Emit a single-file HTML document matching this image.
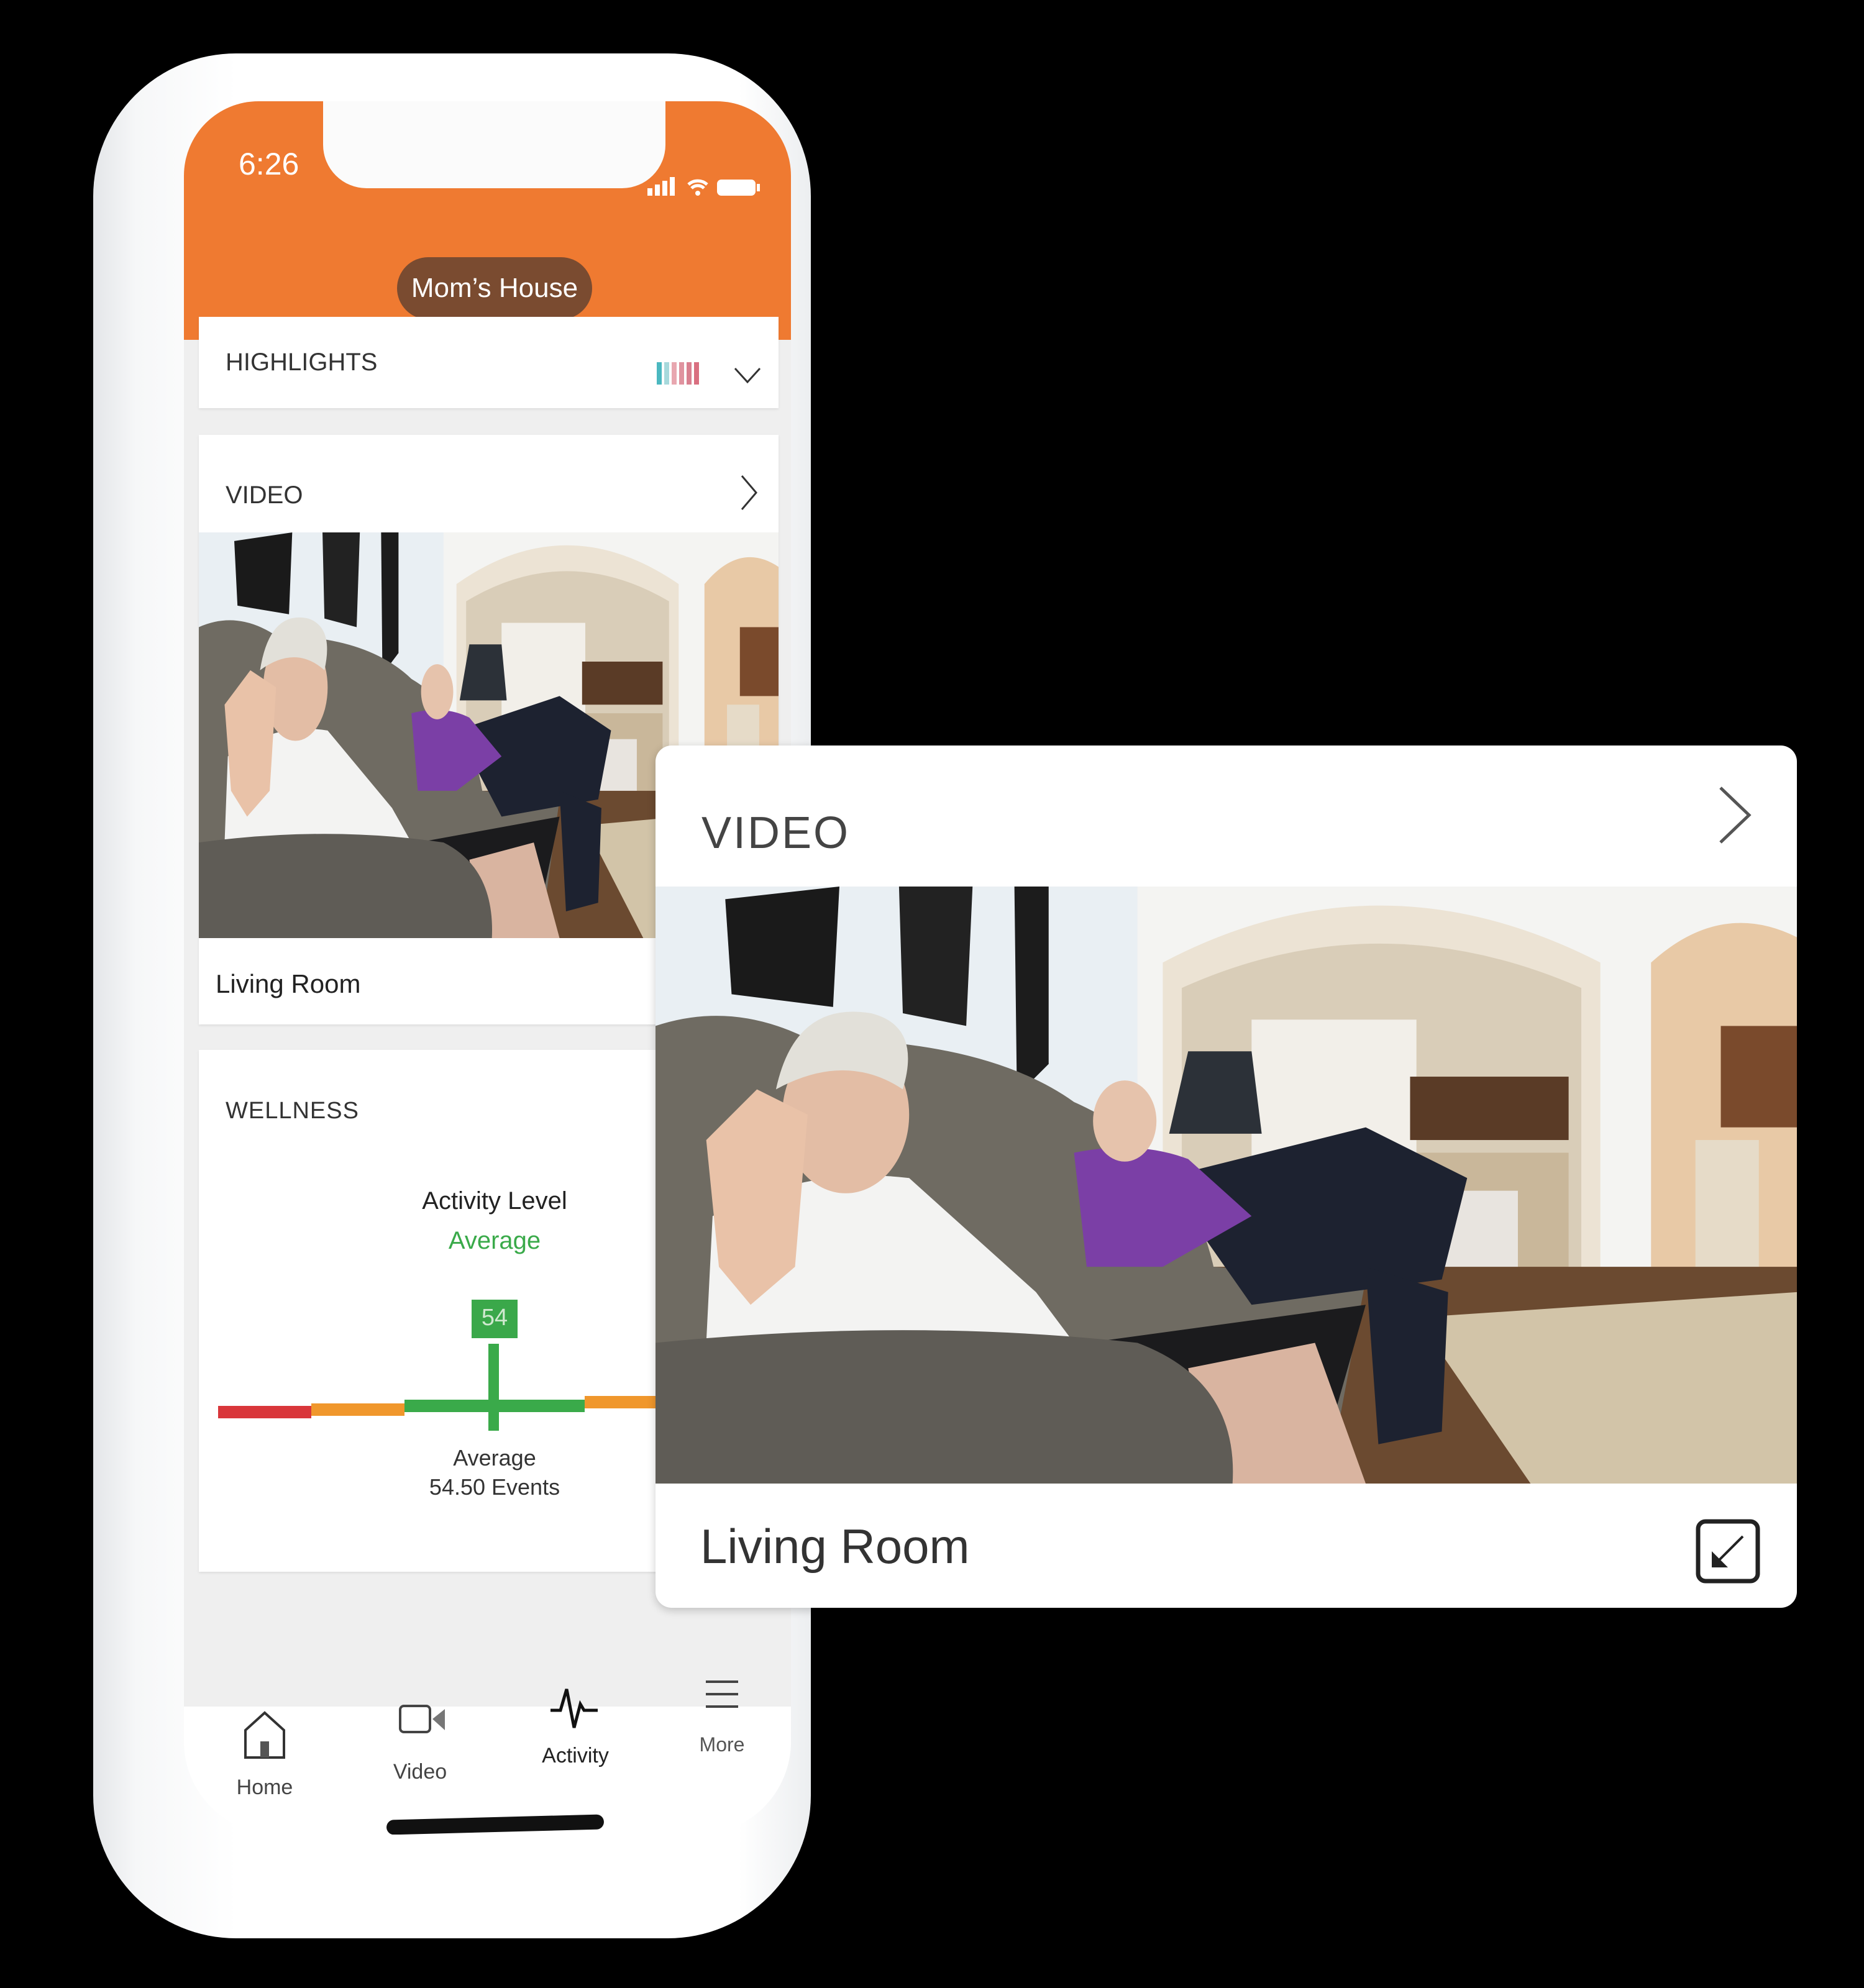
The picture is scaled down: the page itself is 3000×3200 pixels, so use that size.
<!DOCTYPE html>
<html><head><meta charset="utf-8"><style>
*{margin:0;padding:0;box-sizing:border-box}
body{width:3000px;height:3200px;background:#000;position:relative;overflow:hidden;font-family:"Liberation Sans",sans-serif}
.abs{position:absolute}
.phone{left:150px;top:86px;width:1155px;height:3034px;border-radius:230px;background:linear-gradient(90deg,#e4e6e9 0,#f6f7f8 6%,#fff 20%,#fff 90%,#eceef0 100%)}
.screen{left:296px;top:163px;width:977px;height:2790px;border-radius:120px 120px 150px 150px;background:#fff;overflow:hidden}
.gray{left:0;top:384px;width:977px;height:2200px;background:#efefef}
.hdr{left:0;top:0;width:977px;height:384px;background:#ef7a31}
.notch{left:224px;top:-20px;width:551px;height:160px;background:#fbfbfb;border-radius:0 0 70px 70px}
.card{background:#fff;box-shadow:0 2px 4px rgba(0,0,0,.08)}
.t{color:#222;white-space:nowrap}
</style></head><body>
<div class="abs phone"></div>
<div class="abs screen">
 <div class="abs hdr"></div>
 <div class="abs notch"></div>
 <div class="abs t" style="left:88px;top:72px;font-size:50px;color:#fff">6:26</div>
 <svg class="abs" style="left:746px;top:118px" width="190" height="40" viewBox="0 0 190 40">
  <rect x="0" y="22" width="8" height="12" fill="#fff"/><rect x="12" y="16" width="8" height="18" fill="#fff"/><rect x="24" y="10" width="8" height="24" fill="#fff"/><rect x="36" y="4" width="8" height="30" fill="#fff"/>
  <path d="M66 16a22 22 0 0 1 30 0M71 22a14 14 0 0 1 20 0" stroke="#fff" stroke-width="5" fill="none"/><circle cx="81" cy="30" r="4" fill="#fff"/>
  <rect x="112" y="8" width="62" height="26" rx="7" fill="#fff"/><rect x="176" y="15" width="5" height="12" fill="#fff"/>
 </svg>
 <div class="abs" style="left:343px;top:251px;width:314px;height:100px;border-radius:50px;background:#7a4b30"></div>
 <div class="abs t" style="left:343px;top:276px;width:314px;text-align:center;font-size:44px;color:#fff">Mom’s House</div>
 <div class="abs gray"></div>
 <div class="abs card" style="left:24px;top:347px;width:933px;height:147px"></div>
 <div class="abs t" style="left:67px;top:398px;font-size:40px;color:#333">HIGHLIGHTS</div>
 <svg class="abs" style="left:761px;top:420px" width="80" height="36"><rect x="0" width="8" height="36" fill="#4bb8c0"/><rect x="12" width="8" height="36" fill="#a7d9dc"/><rect x="24" width="8" height="36" fill="#e8a7b0"/><rect x="36" width="8" height="36" fill="#e0939f"/><rect x="48" width="8" height="36" fill="#d9808f"/><rect x="60" width="8" height="36" fill="#d96f80"/></svg>
 <svg class="abs" style="left:885px;top:428px" width="44" height="26"><path d="M2 2L22 24L42 2" stroke="#333" stroke-width="3" fill="none"/></svg>
 <div class="abs card" style="left:24px;top:537px;width:933px;height:949px"></div>
 <div class="abs t" style="left:67px;top:612px;font-size:40px;color:#333">VIDEO</div>
 <svg class="abs" style="left:895px;top:600px" width="30" height="60"><path d="M3 3L26 30L3 57" stroke="#333" stroke-width="3" fill="none"/></svg>
 <svg class="abs" style="left:24px;top:694px" width="933" height="653" viewBox="0 0 900 471" preserveAspectRatio="none"><use href="#scene"/></svg>
 <div class="abs t" style="left:51px;top:1397px;font-size:42px">Living Room</div>
 <div class="abs card" style="left:24px;top:1527px;width:933px;height:840px"></div>
 <div class="abs t" style="left:67px;top:1604px;font-size:38px;letter-spacing:1px;color:#333">WELLNESS</div>
 <div class="abs t" style="left:300px;top:1748px;width:400px;text-align:center;font-size:40px">Activity Level</div>
 <div class="abs t" style="left:300px;top:1812px;width:400px;text-align:center;font-size:40px;color:#3aaa4a">Average</div>
 <div class="abs" style="left:463px;top:1929px;width:74px;height:62px;background:#3aa84a"></div>
 <div class="abs t" style="left:463px;top:1937px;width:74px;text-align:center;font-size:38px;color:#cfe9cf">54</div>
 <div class="abs" style="left:55px;top:2100px;width:150px;height:20px;background:#d9363a"></div>
 <div class="abs" style="left:205px;top:2096px;width:150px;height:20px;background:#f0972c"></div>
 <div class="abs" style="left:355px;top:2090px;width:290px;height:20px;background:#3aaa4a"></div>
 <div class="abs" style="left:645px;top:2084px;width:300px;height:20px;background:#f0972c"></div>
 <div class="abs" style="left:490px;top:2000px;width:17px;height:140px;background:#3aaa4a"></div>
 <div class="abs t" style="left:300px;top:2163px;width:400px;text-align:center;font-size:36px;color:#333">Average</div>
 <div class="abs t" style="left:300px;top:2210px;width:400px;text-align:center;font-size:36px;color:#333">54.50 Events</div>
 <div class="abs" style="left:0;top:2584px;width:977px;height:300px;background:#fff"></div>
 <svg class="abs" style="left:95px;top:2590px" width="70" height="80"><path d="M4 76V32L35 4L66 32V76Z" stroke="#333" stroke-width="4" fill="none"/><rect x="28" y="50" width="14" height="26" fill="#555"/></svg>
 <div class="abs t" style="left:60px;top:2695px;width:140px;text-align:center;font-size:34px;color:#444">Home</div>
 <svg class="abs" style="left:345px;top:2580px" width="80" height="50"><rect x="3" y="3" width="48" height="42" rx="6" stroke="#444" stroke-width="4" fill="none"/><path d="M55 24L75 8V42Z" fill="#777"/></svg>
 <div class="abs t" style="left:310px;top:2670px;width:140px;text-align:center;font-size:34px;color:#444">Video</div>
 <svg class="abs" style="left:588px;top:2550px" width="80" height="72"><path d="M2 40H18L28 6L40 68L50 30L56 40H78" stroke="#111" stroke-width="5" fill="none"/></svg>
 <div class="abs t" style="left:560px;top:2644px;width:140px;text-align:center;font-size:34px;color:#222">Activity</div>
 <svg class="abs" style="left:838px;top:2540px" width="56" height="50"><path d="M2 4H54M2 24H54M2 44H54" stroke="#444" stroke-width="4"/></svg>
 <div class="abs t" style="left:796px;top:2627px;width:140px;text-align:center;font-size:32px;color:#555">More</div>
 <div class="abs" style="left:326px;top:2762px;width:350px;height:24px;border-radius:12px;background:#111;transform:rotate(-1.5deg)"></div>
</div>

<div class="abs" style="left:1055px;top:1200px;width:1837px;height:1388px;background:#fff;border-radius:26px;overflow:hidden;box-shadow:0 4px 14px rgba(0,0,0,.2)">
 <div class="abs t" style="left:74px;top:100px;font-size:72px;color:#444;letter-spacing:3px">VIDEO</div>
 <svg class="abs" style="left:1708px;top:62px" width="60" height="100"><path d="M6 6L52 50L6 94" stroke="#555" stroke-width="5" fill="none"/></svg>
 <svg class="abs" style="left:0;top:227px" width="1837" height="961" viewBox="0 0 900 471" preserveAspectRatio="none">
  <defs><g id="scene">
   <rect width="900" height="471" fill="#e9eff3"/>
   <rect x="380" y="0" width="520" height="330" fill="#f4f4f2"/>
   <path d="M400 320V60Q570 -30 745 60V320Z" fill="#ece3d4"/>
   <path d="M415 320V80Q570 10 730 80V320Z" fill="#d9cdb8"/>
   <rect x="470" y="105" width="130" height="200" fill="#f2efe9"/>
   <rect x="595" y="150" width="125" height="50" fill="#5a3b26"/>
   <rect x="560" y="210" width="160" height="100" fill="#c9b79a"/>
   <rect x="620" y="240" width="60" height="70" fill="#e8e4df"/>
   <path d="M785 320V60Q840 10 900 40V320Z" fill="#e8c9a6"/>
   <rect x="840" y="110" width="60" height="80" fill="#7a4a2c"/>
   <rect x="820" y="200" width="50" height="130" fill="#e6dbc8"/>
   <rect x="380" y="300" width="520" height="171" fill="#6b4a30"/>
   <path d="M600 340L900 320V471H690Z" fill="#d2c4a8"/>
   <path d="M55 10L145 0L140 95L60 85Z" fill="#1a1a1a"/>
   <path d="M192 0H250L245 110L195 100Z" fill="#222"/>
   <path d="M283 0H310V140L285 165Z" fill="#1c1c1c"/>
   <path d="M405 195L420 130H470L478 195Z" fill="#2c3138"/>
   <path d="M0 110Q60 90 120 120Q260 120 330 170Q420 210 440 300L560 310L530 471H0Z" fill="#6f6b62"/>
   <path d="M400 230L560 190L640 230L620 310L470 330Z" fill="#1d2230"/>
   <path d="M560 300L625 320L620 430L570 440Z" fill="#1d2230"/>
   <path d="M330 210Q380 200 420 215L470 260L400 300L340 300Z" fill="#7b3fa6"/>
   <ellipse cx="370" cy="185" rx="25" ry="32" fill="#e6c3ac"/>
   <path d="M45 260Q120 220 200 230L300 320L330 360L40 360Z" fill="#f3f3f2"/>
   <ellipse cx="150" cy="180" rx="50" ry="62" fill="#e3bda5"/>
   <path d="M95 160Q110 90 170 100Q210 110 195 160Q150 130 95 160Z" fill="#e2e0d9"/>
   <path d="M40 200L80 160L120 180L110 300L75 330L50 300Z" fill="#e9c2a8"/>
   <path d="M340 360L560 330L520 471H300Z" fill="#1b1b1d"/>
   <path d="M420 380L520 360L560 471H440Z" fill="#d9b4a0"/>
   <path d="M0 360Q200 340 380 360Q460 390 455 471H0Z" fill="#5f5c56"/>
  </g></defs>
  <use href="#scene"/>
 </svg>
 <div class="abs t" style="left:72px;top:1244px;font-size:78px;color:#333">Living Room</div>
 <svg class="abs" style="left:1674px;top:1245px" width="104" height="104"><rect x="4" y="4" width="96" height="96" rx="12" stroke="#222" stroke-width="7" fill="none"/><path d="M36 68L76 28" stroke="#222" stroke-width="4"/><path d="M26 78V52L52 78Z" fill="#222"/></svg>
</div>
</body></html>
